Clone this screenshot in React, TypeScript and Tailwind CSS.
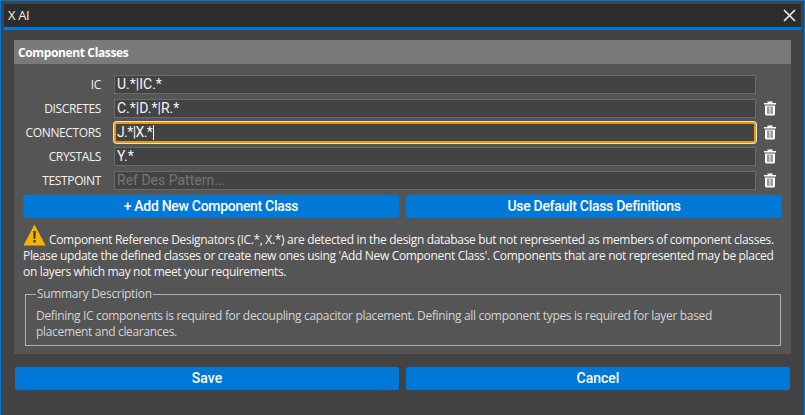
const segoe = "font-['Open_Sans',sans-serif] tracking-[-0.37px]";
const paragraph = "font-['Open_Sans',sans-serif] tracking-[-0.33px]";

const rows = [
  { label: "IC", value: "U.*|IC.*", removable: false },
  { label: "DISCRETES", value: "C.*|D.*|R.*", removable: true },
  { label: "CONNECTORS", value: "J.*|X.*", removable: true, focused: true },
  { label: "CRYSTALS", value: "Y.*", removable: true },
  { label: "TESTPOINT", value: "", removable: true },
];

function TrashIcon() {
  return (
    <svg width="12" height="15" viewBox="0 0 12 15" className="block">
      <path d="M3.5 2V.5h5V2H12v1.6H0V2z" fill="#fff" />
      <path d="M1 4.4h10V13a1.6 1.6 0 0 1-1.6 1.6H2.6A1.6 1.6 0 0 1 1 13z" fill="#fff" />
      <rect x="3" y="5.5" width="6" height="7.5" fill="#9a9a9a" />
      <rect x="5" y="5.5" width="2" height="7.5" fill="#c9c9c9" />
    </svg>
  );
}

function WarningIcon() {
  return (
    <svg width="23" height="22" viewBox="0 0 23 22" className="absolute left-0 top-0">
      <path d="M11.5 0.5 22.6 21.5H0.4z" fill="#f6b400" />
      <path d="M10.2 7h2.6l-.5 8h-1.6z" fill="#3d3a30" />
      <rect x="10.3" y="16" width="2.4" height="2.4" fill="#3d3a30" />
    </svg>
  );
}

function ClassRow({ label, value, removable, focused }: { label: string; value: string; removable: boolean; focused?: boolean }) {
  return (
    <div className="flex h-[19px] items-center">
      <div className={`w-[78px] shrink-0 whitespace-nowrap text-right text-[12px] text-[#f2f2f2] ${segoe}`}>{label}</div>
      <div
        className={
          focused
            ? "ml-[13px] flex h-[21px] w-[642px] items-center rounded-[3px] border-2 border-[#e79a0c] bg-[#434343] pl-[1px] tracking-[-0.6px] shadow-[0_0_0_1px_#e8e2d0] font-['Roboto',sans-serif] text-[14px] text-[#f4f4f4]"
            : "ml-[13px] flex h-[19px] w-[642px] items-center border border-[#6a6a6a] bg-[#434343] pl-[2px] font-['Roboto',sans-serif] text-[14px] text-[#f4f4f4]"
        }
      >
        {value ? <span>{value}</span> : <span className="text-[#757575]">Ref Des Pattern...</span>}
        {focused && <span className="ml-px h-[15px] w-px bg-white" />}
      </div>
      {removable && (
        <div className="ml-[8px]">
          <TrashIcon />
        </div>
      )}
    </div>
  );
}

export default function App() {
  return (
    <div className="h-[415px] w-[805px] overflow-hidden border border-b-0 border-[#0078d7] bg-[#434343] px-[3px] pt-[3px]">
      <div className="flex h-[26px] items-center justify-between border-b-[3px] border-[#0078d7] bg-[#2d2d2d] pl-[4px] pr-[5px]">
        <span className={`text-[13px] text-[#f0f0f0] ${segoe}`}>X AI</span>
        <svg width="13" height="13" viewBox="0 0 13 13" stroke="#f2f2f2" strokeWidth="1.6">
          <path d="M1 1l11 11M12 1 1 12" />
        </svg>
      </div>

      <div className="ml-[10px] mt-[10px] h-[314px] w-[777px] bg-[#555555]">
        <div className={`flex h-[24px] items-center bg-[#7a7a7a] pl-[4px] pt-[1px] text-[12px] font-bold text-white ${segoe}`}>Component Classes</div>

        <div className="pl-[9px] pt-[11px]">
          <div className="flex flex-col gap-[5px]">
            {rows.map((row) => (
              <ClassRow key={row.label} {...row} />
            ))}
          </div>

          <div className="mt-[5px] flex gap-[7px] font-['Roboto',sans-serif] text-[14px] font-medium tracking-[-0.3px]">
            <button className="h-[23px] w-[376px] rounded-[2px] bg-[#0078d7] text-white">+ Add New Component Class</button>
            <button className="h-[23px] w-[376px] rounded-[2px] bg-[#0078d7] text-white">Use Default Class Definitions</button>
          </div>

          <div className={`relative mt-[6px] w-[755px] pt-[8px] text-[12px] leading-[16px] text-[#f4f4f4] ${paragraph}`}>
            <WarningIcon />
            <p className="indent-[26px]">
              Component Reference Designators (IC.*, X.*) are detected in the design database but not represented as members of component classes. Please update the defined classes or create new ones using 'Add New Component Class'. Components that are not represented may be placed on layers which may not meet your requirements.
            </p>
          </div>

          <fieldset className={`ml-[2px] mt-[6px] h-[60px] w-[756px] border border-[#b0b0b0] pl-[10px] pr-[40px] pt-[6px] text-[12px] leading-[16px] text-[#d4d4d4] ${paragraph}`}>
            <legend className="px-[1px]">Summary Description</legend>
            <p>Defining IC components is required for decoupling capacitor placement. Defining all component types is required for layer based placement and clearances.</p>
          </fieldset>
        </div>
      </div>

      <div className="ml-[11px] mt-[13px] flex gap-[7px] font-['Roboto',sans-serif] text-[14px] font-medium text-white">
        <button className="h-[23px] w-[384px] rounded-[2px] bg-[#0078d7]">Save</button>
        <button className="h-[23px] w-[384px] rounded-[2px] bg-[#0078d7]">Cancel</button>
      </div>
    </div>
  );
}
